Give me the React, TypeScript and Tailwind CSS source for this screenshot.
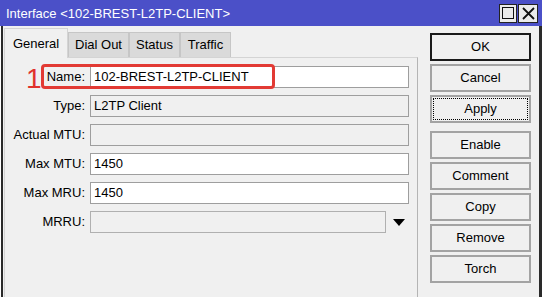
import React from "react";

const fields = [
  { label: "Name:", value: "102-BREST-L2TP-CLIENT", editable: true },
  { label: "Type:", value: "L2TP Client", editable: false },
  { label: "Actual MTU:", value: "", editable: false },
  { label: "Max MTU:", value: "1450", editable: true },
  { label: "Max MRU:", value: "1450", editable: true },
];

const tabs = ["General", "Dial Out", "Status", "Traffic"];

function Btn({
  label,
  variant,
  className = "",
}: {
  label: string;
  variant?: "default" | "focus";
  className?: string;
}) {
  const border =
    variant === "default" ? "border-2 border-[#1a1a1a]" : "border-2 border-[#a3a3a3]";
  return (
    <div
      className={`relative h-[28px] flex items-center justify-center bg-[#f0f0f0] ${border} ${className}`}
    >
      {variant === "focus" && (
        <div className="absolute inset-[1px] border border-dotted border-black"></div>
      )}
      <span className="relative">{label}</span>
    </div>
  );
}

export default function App() {
  return (
    <div className="w-[542px] h-[297px] overflow-hidden bg-[#f0f0f0] flex flex-col text-[13px] text-black font-['Liberation_Sans',Arial,sans-serif]">
      {/* Title bar */}
      <div className="h-[26px] shrink-0 bg-[#4b50c8] flex items-center pl-[6px] pr-[4px] text-white">
        <span className="leading-none">Interface &lt;102-BREST-L2TP-CLIENT&gt;</span>
        <div className="ml-auto flex gap-[1px] text-black">
          <div className="w-[18px] h-[19px] bg-[#ebebeb] border border-[#222] flex items-center justify-center">
            <div className="w-[12px] h-[12px] border-[1.5px] border-[#111]"></div>
          </div>
          <div className="w-[20px] h-[19px] bg-[#ebebeb] border border-[#222] flex items-center justify-center">
            <svg width="13" height="13" viewBox="0 0 13 13">
              <path d="M1 1 L12 12 M12 1 L1 12" stroke="#111" strokeWidth="1.8" />
            </svg>
          </div>
        </div>
      </div>

      {/* Body */}
      <div className="flex-1 min-h-0 border-l border-white">
        <div className="h-full flex border-l-2 border-r-[3px] border-[#2a2a2a]">
          {/* Tabs + panel */}
          <div className="flex flex-col pl-px pt-[2px]">
            <div className="flex items-end h-[29px]">
              {tabs.map((t, i) =>
                i === 0 ? (
                  <div
                    key={t}
                    className="relative z-10 -mb-px h-[30px] w-[64px] bg-[#f0f0f0] border border-b-0 border-[#d4d4d4] flex items-center justify-center"
                  >
                    {t}
                  </div>
                ) : (
                  <div
                    key={t}
                    className={`h-[25px] bg-[#dadada] border border-b-0 border-[#c6c6c6] flex items-center justify-center ${
                      i === 1 ? "w-[61px]" : "w-[51px]"
                    }`}
                  >
                    {t}
                  </div>
                ),
              )}
            </div>

            <div className="relative flex-1 w-[414px] border border-[#d4d4d4] border-r-[#b4b4b4] border-b-0 pt-[8px]">
              {/* annotation */}
              <div className="absolute left-[21px] top-[7px] text-[28px] leading-none text-[#e0322c]">
                1
              </div>
              <div className="absolute left-[36px] top-[6px] w-[234px] h-[25px] rounded-[4px] border-[3px] border-[#e23a34]"></div>

              <div className="flex flex-col gap-[7px]">
                {fields.map((f) => (
                  <div key={f.label} className="flex items-center gap-[5px]">
                    <div className="w-[80px] text-right">{f.label}</div>
                    <div
                      className={`w-[319px] h-[22px] flex items-center pl-[3px] border border-[#9e9e9e] ${
                        f.editable ? "bg-white" : "bg-[#f0f0f0]"
                      }`}
                    >
                      {f.value}
                    </div>
                  </div>
                ))}
                <div className="flex items-center gap-[5px]">
                  <div className="w-[80px] text-right">MRRU:</div>
                  <div className="w-[296px] h-[22px] border border-[#b0b0b0] bg-[#f0f0f0]"></div>
                  <svg width="12" height="7" viewBox="0 0 12 7" className="ml-[2px]">
                    <polygon points="0,0 12,0 6,7" fill="#000" />
                  </svg>
                </div>
              </div>
            </div>
          </div>

          {/* Buttons */}
          <div className="ml-[12px] w-[101px] pt-[7px] flex flex-col gap-[3px]">
            <Btn label="OK" variant="default" />
            <Btn label="Cancel" />
            <Btn label="Apply" variant="focus" />
            <Btn label="Enable" className="mt-[5px]" />
            <Btn label="Comment" />
            <Btn label="Copy" />
            <Btn label="Remove" />
            <Btn label="Torch" />
          </div>
        </div>
      </div>
    </div>
  );
}
